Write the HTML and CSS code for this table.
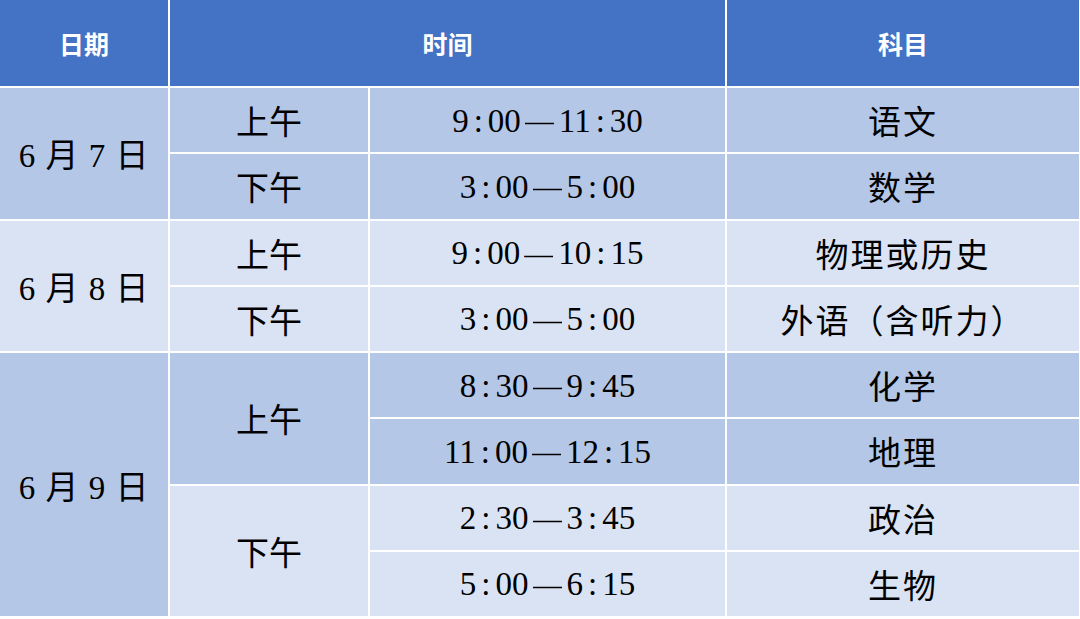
FILE: index.html
```html
<!DOCTYPE html>
<html lang="zh">
<head>
<meta charset="utf-8">
<link rel="stylesheet" href="styles.css">
</head>
<body>
<div class="table">
  <div class="cell head c1">日期</div>
  <div class="cell head c2 span2">时间</div>
  <div class="cell head c4">科目</div>

  <div class="cell dark date r1-2">6 月 7 日</div>
  <div class="cell dark half">上午</div>
  <div class="cell dark num">9<span class="colon">:</span>00<span class="dash">—</span>11<span class="colon">:</span>30</div>
  <div class="cell dark">语文</div>
  <div class="cell dark half">下午</div>
  <div class="cell dark num">3<span class="colon">:</span>00<span class="dash">—</span>5<span class="colon">:</span>00</div>
  <div class="cell dark">数学</div>

  <div class="cell light date r2">6 月 8 日</div>
  <div class="cell light half">上午</div>
  <div class="cell light num">9<span class="colon">:</span>00<span class="dash">—</span>10<span class="colon">:</span>15</div>
  <div class="cell light">物理或历史</div>
  <div class="cell light half">下午</div>
  <div class="cell light num">3<span class="colon">:</span>00<span class="dash">—</span>5<span class="colon">:</span>00</div>
  <div class="cell light">外语（含听力）</div>

  <div class="cell dark date r4">6 月 9 日</div>
  <div class="cell dark half r2">上午</div>
  <div class="cell dark num">8<span class="colon">:</span>30<span class="dash">—</span>9<span class="colon">:</span>45</div>
  <div class="cell dark">化学</div>
  <div class="cell dark num">11<span class="colon">:</span>00<span class="dash">—</span>12<span class="colon">:</span>15</div>
  <div class="cell dark">地理</div>
  <div class="cell light half r2">下午</div>
  <div class="cell light num">2<span class="colon">:</span>30<span class="dash">—</span>3<span class="colon">:</span>45</div>
  <div class="cell light">政治</div>
  <div class="cell light num">5<span class="colon">:</span>00<span class="dash">—</span>6<span class="colon">:</span>15</div>
  <div class="cell light">生物</div>
</div>
</body>
</html>
```
FILE: styles.css
```css
html, body {
  margin: 0;
  padding: 0;
  background: #ffffff;
}
.table {
  display: grid;
  grid-template-columns: 168px 198px 355px 352px;
  grid-template-rows: 86px repeat(8, 1fr);
  gap: 2px;
  width: 1079px;
  height: 616px;
  background: #ffffff;
  font-family: "Liberation Serif", "Noto Sans CJK SC", serif;
  font-size: 33px;
  color: #000;
}
.cell {
  display: flex;
  align-items: center;
  justify-content: center;
  white-space: pre;
  letter-spacing: 2px;
}
.half {
  letter-spacing: 0;
}
.head {
  background: #4472c4;
  color: #fff;
  font-family: "Noto Sans CJK SC", sans-serif;
  font-weight: bold;
  font-size: 25px;
  letter-spacing: 0;
}
.span2 { grid-column: span 2; }
.dark { background: #b4c7e7; }
.light { background: #dae3f3; }
.date { grid-column: 1; letter-spacing: 1px; }
.r1-2, .r2 { grid-row: span 2; }
.r4 { grid-row: span 4; }
.num {
  font-family: "Liberation Serif", serif;
  letter-spacing: 0;
  padding-top: 2px;
}
.colon {
  margin: 0 5px;
}
.dash {
  display: inline-block;
  width: 29px;
  margin: 0 5px 0 4px;
  overflow: hidden;
  text-align: center;
  font-size: 30px;
}
```
